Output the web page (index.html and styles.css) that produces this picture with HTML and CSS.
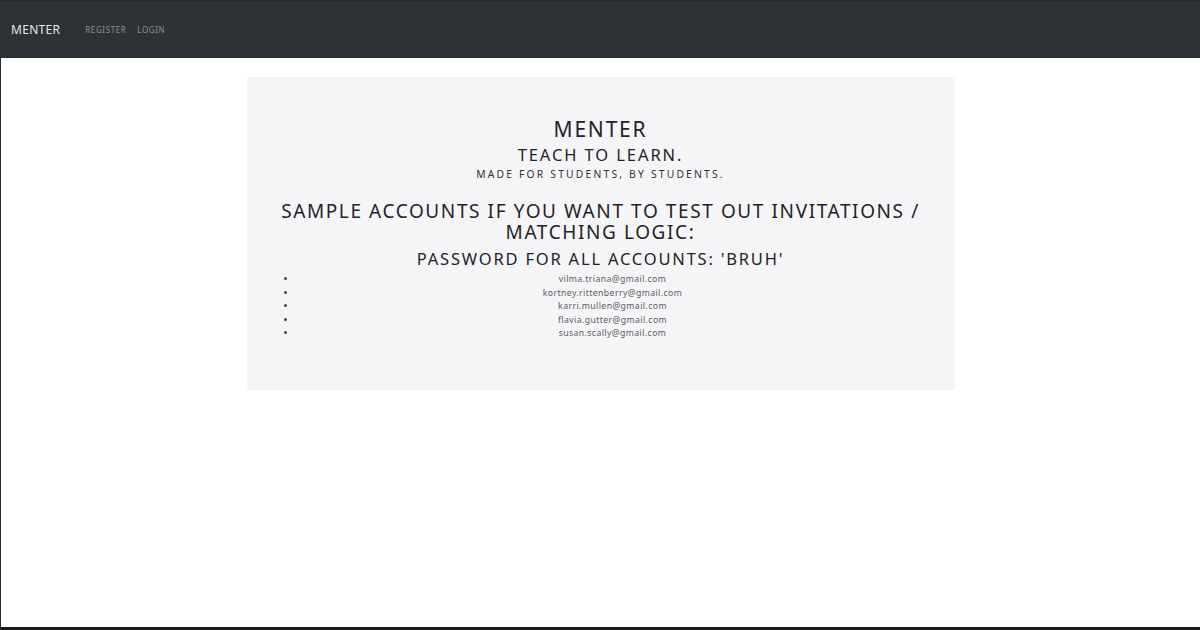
FILE: index.html
```html
<!DOCTYPE html>
<html>
<head>
<meta charset="utf-8">
<link rel="stylesheet" href="styles.css">
</head>
<body>
<div class="frame">
  <nav class="navbar">
    <span class="brand">MENTER</span>
    <a class="nav-link" href="#">REGISTER</a>
    <a class="nav-link" href="#">LOGIN</a>
  </nav>
  <main class="main">
    <section class="panel">
      <h1 class="title">MENTER</h1>
      <h2 class="tagline">TEACH TO LEARN.</h2>
      <p class="sub">MADE FOR STUDENTS, BY STUDENTS.</p>
      <h2 class="sample">SAMPLE ACCOUNTS IF YOU WANT TO TEST OUT INVITATIONS / MATCHING LOGIC:</h2>
      <h3 class="password">PASSWORD FOR ALL ACCOUNTS: 'BRUH'</h3>
      <ul class="accounts">
        <li>vilma.triana@gmail.com</li>
        <li>kortney.rittenberry@gmail.com</li>
        <li>karri.mullen@gmail.com</li>
        <li>flavia.gutter@gmail.com</li>
        <li>susan.scally@gmail.com</li>
      </ul>
    </section>
  </main>
</div>
</body>
</html>
```

FILE: styles.css
```css
* { box-sizing: border-box; }
html, body { margin: 0; padding: 0; }
body {
  font-family: "Noto Sans", "Open Sans", sans-serif;
  background: #fff;
}
.frame {
  height: 630px;
  border-left: 1px solid #2b2e32;
  border-bottom: 3px solid #1a1a1a;
  border-top: 1px solid #25282c;
  display: flex;
  flex-direction: column;
}
.navbar {
  height: 57px;
  background: #2e3237;
  display: flex;
  align-items: center;
  padding: 0 10px;
  flex-shrink: 0;
}
.brand {
  color: #e6e7e8;
  font-size: 12px;
  letter-spacing: 0.3px;
  margin-right: 25px;
}
.nav-link {
  color: #8d9095;
  font-size: 8px;
  letter-spacing: 0.6px;
  text-decoration: none;
  margin-right: 11px;
}
.main {
  display: flex;
  justify-content: center;
  padding-top: 19px;
}
.panel {
  width: 708px;
  height: 313px;
  background: #f5f5f7;
  padding: 38px 26px 0;
  text-align: center;
  color: #222326;
}
.title {
  margin: 0;
  font-size: 21px;
  font-weight: 400;
  letter-spacing: 1.8px;
  line-height: 29px;
}
.tagline {
  margin: 0;
  font-size: 16.5px;
  font-weight: 400;
  letter-spacing: 1.9px;
  line-height: 22px;
}
.sub {
  margin: 0;
  font-size: 10.3px;
  letter-spacing: 2.2px;
  line-height: 16px;
  color: #333;
}
.sample {
  margin: 19px 0 0;
  font-size: 19px;
  font-weight: 400;
  letter-spacing: 1.6px;
  line-height: 21px;
}
.password {
  margin: 4px 0 0;
  font-size: 16.5px;
  font-weight: 400;
  letter-spacing: 1.8px;
  line-height: 23px;
}
.accounts {
  margin: 3px 0 0;
  padding-left: 24px;
  font-size: 8.7px;
  letter-spacing: 0.4px;
  line-height: 13.5px;
  color: #5a5b5e;
}
.accounts li::marker { color: #444; }
```
